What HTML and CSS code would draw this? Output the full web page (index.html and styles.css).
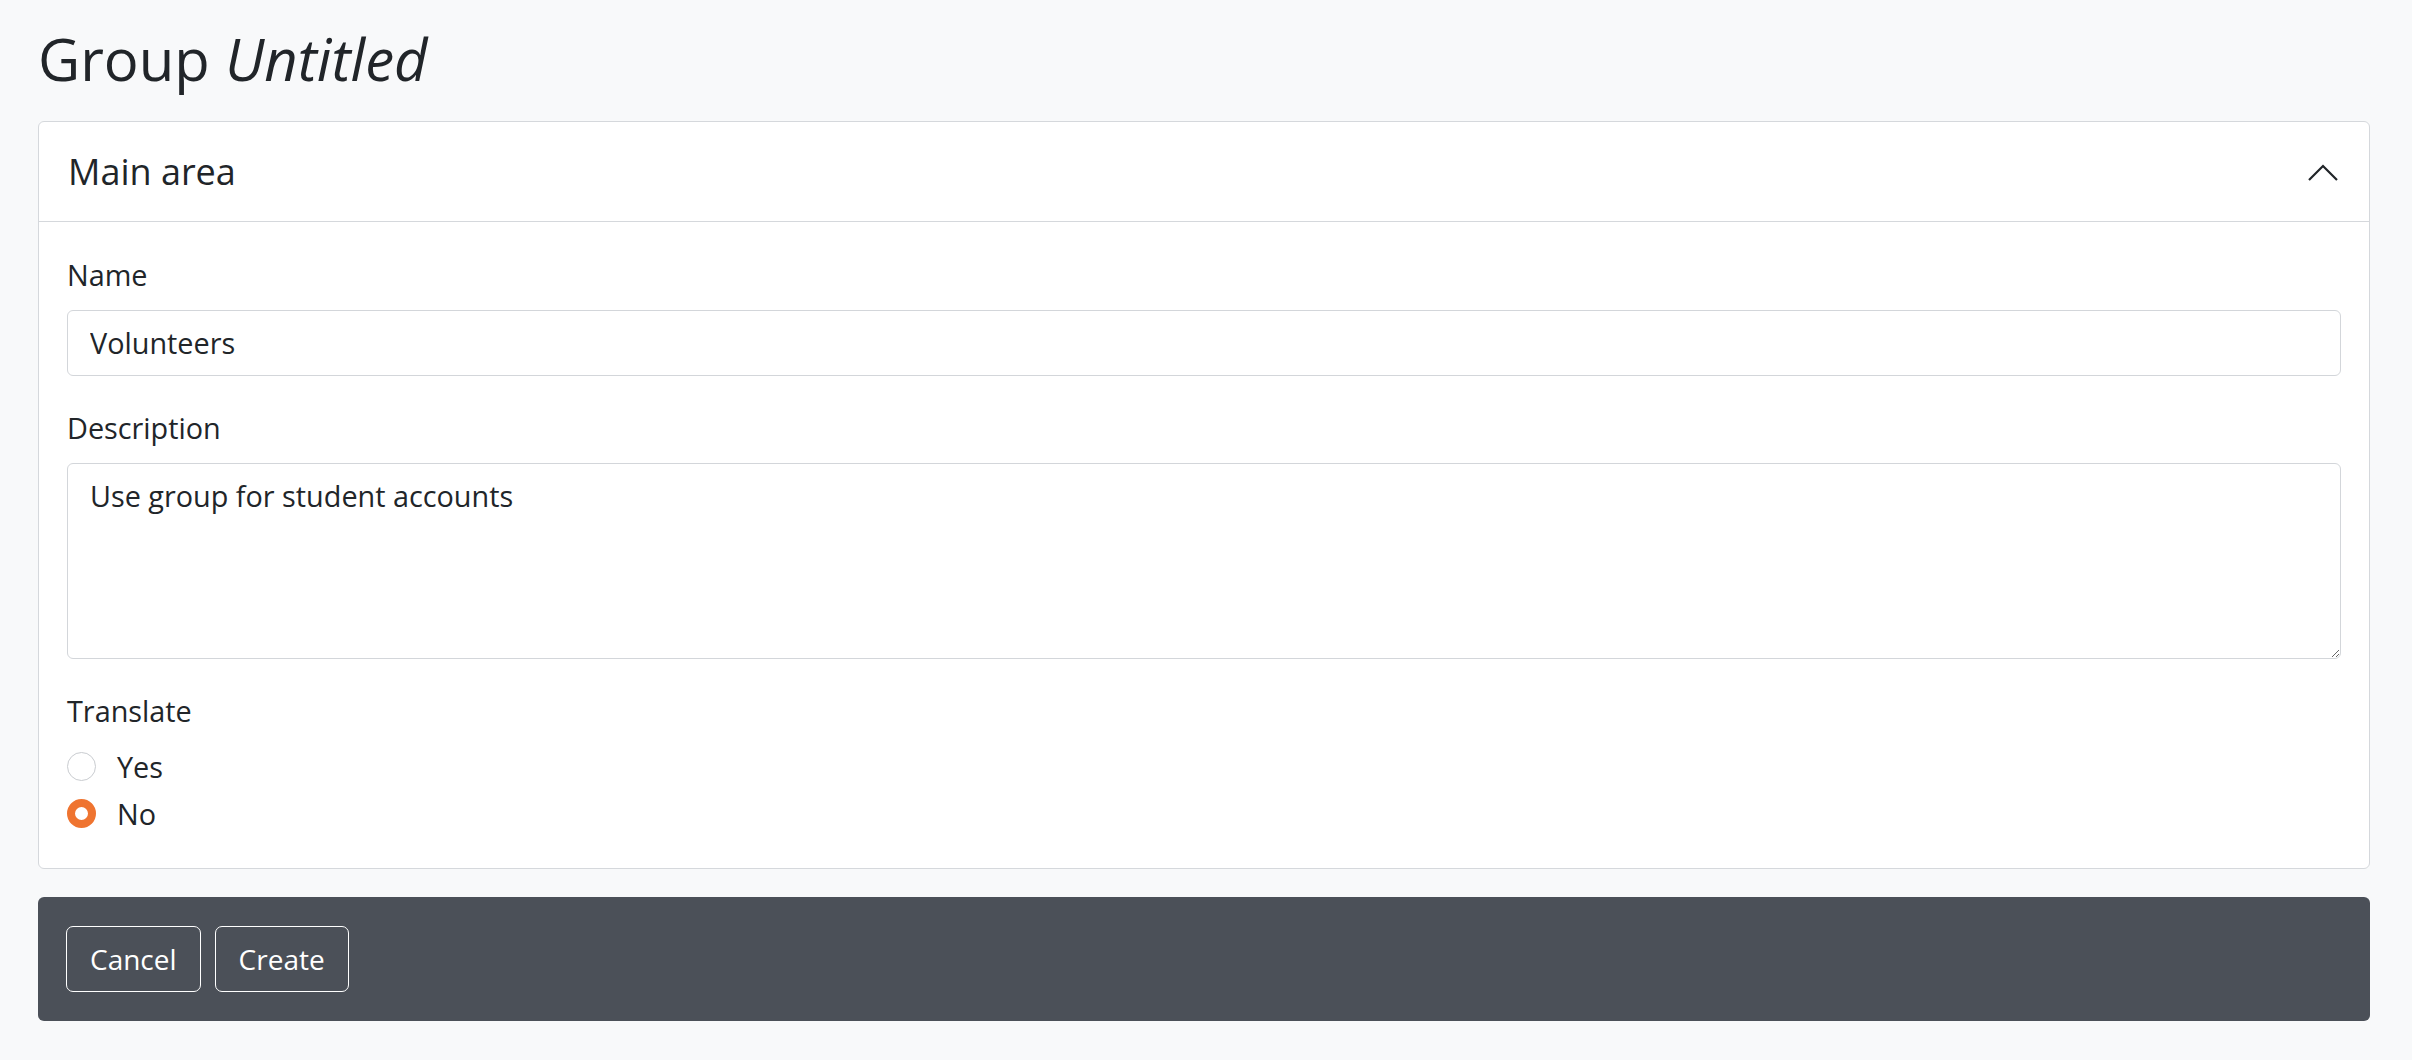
FILE: index.html
```html
<!DOCTYPE html>
<html lang="en">
<head>
<meta charset="utf-8">
<title>Group Untitled</title>
<link rel="stylesheet" href="styles.css">
</head>
<body>
<main class="page">
  <h1 class="page-title">Group <em>Untitled</em></h1>

  <section class="card">
    <header class="card-header">
      <span class="card-title">Main area</span>
      <svg class="chevron" width="30" height="17" viewBox="0 0 30 17" aria-hidden="true">
        <path d="M1 16 L15 2 L29 16" fill="none" stroke="#212529" stroke-width="2.2"/>
      </svg>
    </header>
    <div class="card-body">
      <div class="field">
        <label class="field-label" for="name">Name</label>
        <input class="control" id="name" type="text" value="Volunteers">
      </div>
      <div class="field">
        <label class="field-label" for="desc">Description</label>
        <textarea class="control control-area" id="desc">Use group for student accounts</textarea>
      </div>
      <div class="field field-last">
        <div class="field-label">Translate</div>
        <div class="radio-list">
          <label class="radio-row"><input class="radio" type="radio" name="translate"><span>Yes</span></label>
          <label class="radio-row"><input class="radio" type="radio" name="translate" checked><span>No</span></label>
        </div>
      </div>
    </div>
  </section>

  <footer class="actions">
    <button class="btn" type="button">Cancel</button>
    <button class="btn" type="button">Create</button>
  </footer>
</main>
</body>
</html>
```

FILE: styles.css
```css
* { box-sizing: border-box; }

html, body {
  margin: 0;
  background: #f8f9fa;
}

body {
  font-family: "Open Sans", "Noto Sans", sans-serif;
  color: #212529;
  font-size: 28.8px;
  line-height: 42px;
}

.page {
  padding: 24px 42px 0 38px;
}

.page-title {
  margin: 0 0 27px;
  font-size: 58px;
  font-weight: 400;
  line-height: 1.2;
}

.page-title em {
  font-style: italic;
}

.card {
  background: #fff;
  border: 1px solid #d5d8dc;
  border-radius: 6px;
}

.card-header {
  display: flex;
  align-items: center;
  justify-content: space-between;
  padding: 23px 31px 22px 29px;
  border-bottom: 1px solid #d5d8dc;
  font-size: 36px;
  line-height: 54px;
}

.chevron {
  display: block;
  margin-top: 2px;
}

.card-body {
  padding: 32px 28px 33px 28px;
}

.field {
  margin-bottom: 31px;
}

.field-last {
  margin-bottom: 0;
}

.field-label {
  display: block;
  margin-bottom: 14px;
}

.control {
  display: block;
  width: 100%;
  height: 66px;
  padding: 11px 22px;
  border: 1px solid #d3d6da;
  border-radius: 6px;
  background: #fff;
  font-family: inherit;
  font-size: 28.8px;
  line-height: 42px;
  color: #212529;
  outline: none;
}

.control-area {
  height: 196px;
  resize: vertical;
}

.radio-list {
  display: flex;
  flex-direction: column;
  gap: 5px;
}

.radio-row {
  display: flex;
  align-items: center;
  gap: 21px;
  height: 42px;
}

.radio {
  appearance: none;
  -webkit-appearance: none;
  margin: 0;
  width: 29px;
  height: 29px;
  border-radius: 50%;
  border: 1px solid #c9ccd0;
  background: #fff;
  flex: none;
}

.radio:checked {
  border: 8.5px solid #ef7430;
}

.actions {
  display: flex;
  gap: 14px;
  margin-top: 28px;
  padding: 29px 28px;
  background: #4b5058;
  border-radius: 6px;
}

.btn {
  height: 66px;
  padding: 0 23px;
  border: 1.5px solid #fff;
  border-radius: 7px;
  background: transparent;
  color: #fff;
  font-family: inherit;
  font-size: 28px;
  line-height: 42px;
}
```
